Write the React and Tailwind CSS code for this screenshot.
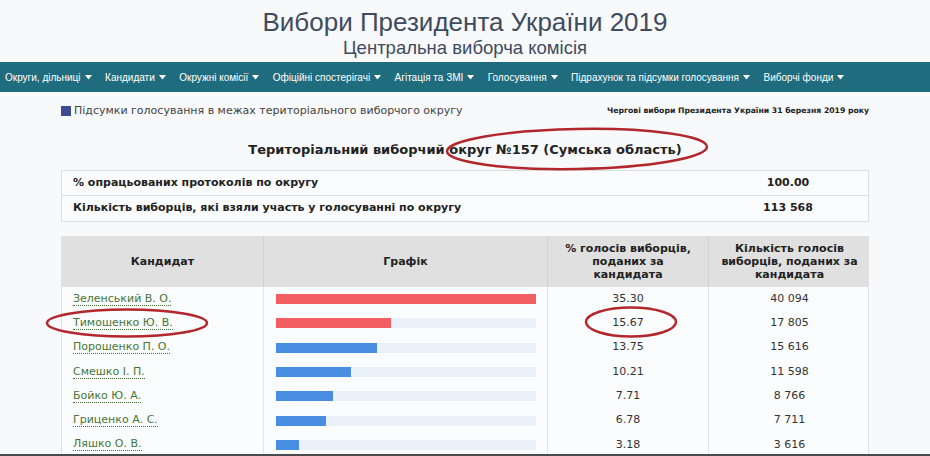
import React from "react";

const navItems = [
  "Округи, дільниці",
  "Кандидати",
  "Окружні комісії",
  "Офіційні спостерігачі",
  "Агітація та ЗМІ",
  "Голосування",
  "Підрахунок та підсумки голосування",
  "Виборчі фонди",
];

const rows = [
  { name: "Зеленський В. О.", pct: "35.30", votes: "40 094", color: "bg-[#f25e62]" },
  { name: "Тимошенко Ю. В.", pct: "15.67", votes: "17 805", color: "bg-[#f25e62]" },
  { name: "Порошенко П. О.", pct: "13.75", votes: "15 616", color: "bg-[#4a8ee4]" },
  { name: "Смешко І. П.", pct: "10.21", votes: "11 598", color: "bg-[#4a8ee4]" },
  { name: "Бойко Ю. А.", pct: "7.71", votes: "8 766", color: "bg-[#4a8ee4]" },
  { name: "Гриценко А. С.", pct: "6.78", votes: "7 711", color: "bg-[#4a8ee4]" },
  { name: "Ляшко О. В.", pct: "3.18", votes: "3 616", color: "bg-[#4a8ee4]" },
];

function Caret() {
  return (
    <svg width="7" height="5" viewBox="0 0 7 5" className="ml-[4px] inline-block">
      <path d="M0 0 L7 0 L3.5 4.5 Z" fill="currentColor" />
    </svg>
  );
}

export default function App() {
  return (
    <div className="relative w-[930px] h-[456px] overflow-hidden bg-[#f7f9fb] border-b-2 border-[#4a4a4a] font-['DejaVu_Sans',sans-serif] text-[#333]">
      <header className="h-[62px] flex flex-col items-center pt-[7px] text-[#3f4b5e] font-['Liberation_Sans',sans-serif]">
        <h1 className="text-[26px] leading-[30px]">Вибори Президента України 2019</h1>
        <div className="text-[18.5px] leading-[22px]">Центральна виборча комісія</div>
      </header>

      <nav className="h-[30px] bg-[#206c7f] flex items-center pl-[5px] gap-[13.5px] text-white text-[10px] font-['Liberation_Sans',sans-serif]">
        {navItems.map((n) => (
          <span key={n} className="flex items-center whitespace-nowrap">
            {n}
            <Caret />
          </span>
        ))}
      </nav>

      <main className="w-[808px] mx-auto">
        <div className="h-[38px] flex items-center justify-between">
          <div className="flex items-center text-[11px] text-[#444]">
            <span className="w-[10px] h-[10px] bg-[#3d4a94] mr-[3px]"></span>
            Підсумки голосування в межах територіального виборчого округу
          </div>
          <div className="text-[7.7px] font-bold text-[#222]">
            Чергові вибори Президента України 31 березня 2019 року
          </div>
        </div>

        <h2 className="h-[40px] flex items-center justify-center text-[13px] font-bold text-[#222]">
          Територіальний виборчий округ №157 (Сумська область)
        </h2>

        <div className="border border-[#dedede] bg-[#fbfcfd] text-[11px] font-bold text-[#222]">
          <div className="h-[25px] flex items-center border-b border-[#dedede]">
            <div className="flex-1 pl-[11px]">% опрацьованих протоколів по округу</div>
            <div className="w-[160px] text-center">100.00</div>
          </div>
          <div className="h-[25px] flex items-center">
            <div className="flex-1 pl-[11px]">Кількість виборців, які взяли участь у голосуванні по округу</div>
            <div className="w-[160px] text-center">113 568</div>
          </div>
        </div>

        <div className="mt-[14px] border-x border-[#e0e0e0] bg-[#fbfcfd]">
          <div className="grid grid-cols-[202px_284px_161px_161px] h-[51px] bg-[#e0e0e0] text-[11px] font-bold text-[#222] leading-[13px]">
            <div className="flex items-center justify-center border-r border-[#d2d2d2]">Кандидат</div>
            <div className="flex items-center justify-center border-r border-[#d2d2d2]">Графік</div>
            <div className="flex items-center justify-center text-center border-r border-[#d2d2d2] px-[12px]">
              % голосів виборців, поданих за кандидата
            </div>
            <div className="flex items-center justify-center text-center px-[6px]">
              Кількість голосів виборців, поданих за кандидата
            </div>
          </div>
          {rows.map((r) => (
            <div key={r.name} className="grid grid-cols-[202px_284px_161px_161px] h-[24.3px] text-[11px]">
              <div className="flex items-center pl-[11px] border-r border-[#e4e4e4]">
                <span className="text-[#46763a] border-b border-dotted border-[#46763a] leading-[12px]">{r.name}</span>
              </div>
              <div className="flex items-center pl-[12px] pr-[11px] border-r border-[#e4e4e4]">
                <div className="w-full h-[10px] bg-[#ebf1f8]">
                  <div
                    className={`h-full ${r.color}`}
                    style={{ width: `${(parseFloat(r.pct) / 35.3) * 100}%` }}
                  ></div>
                </div>
              </div>
              <div className="flex items-center justify-center border-r border-[#e4e4e4] text-[#333]">{r.pct}</div>
              <div className="flex items-center justify-center text-[#333]">{r.votes}</div>
            </div>
          ))}
        </div>
      </main>

      <svg className="absolute left-0 top-0 pointer-events-none" width="930" height="456">
        <g fill="none" stroke="#b3262c" strokeWidth="2.5">
          <ellipse cx="577" cy="149" rx="130" ry="20" transform="rotate(-1 577 149)" />
          <ellipse cx="127" cy="323" rx="80" ry="13.5" />
          <ellipse cx="631" cy="322" rx="45" ry="14.5" />
        </g>
      </svg>
    </div>
  );
}
